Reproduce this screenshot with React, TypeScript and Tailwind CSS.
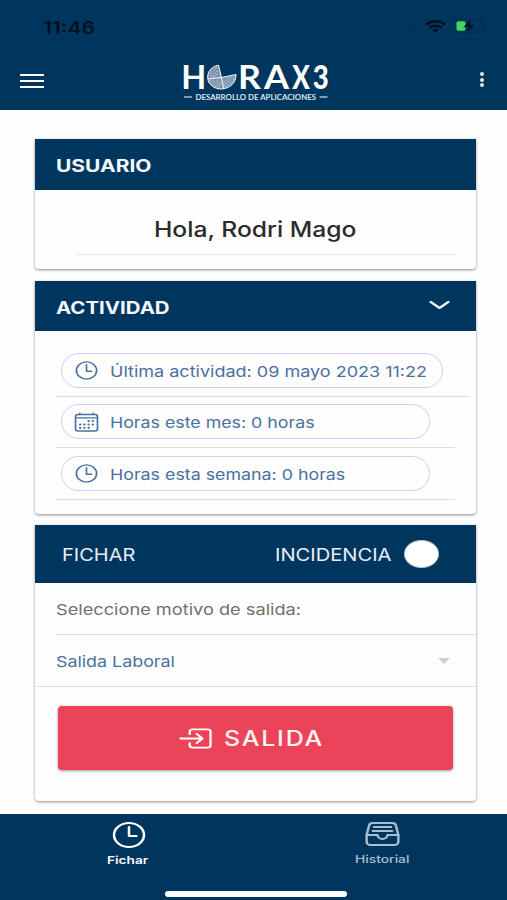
import React, { useLayoutEffect, useRef, useState } from 'react';
import {
  IoCalendarOutline,
  IoChevronDown,
  IoEnterOutline,
  IoFileTrayFullOutline,
  IoTimeOutline,
} from 'react-icons/io5';

// Text in the app's wide face: stretches its content to fill the given width
function Wide({ width, className = '', children }: { width: number; className?: string; children: React.ReactNode }) {
  const ref = useRef<HTMLSpanElement>(null);
  const [scale, setScale] = useState(1.2);

  useLayoutEffect(() => {
    if (ref.current) setScale(width / ref.current.offsetWidth);
  }, [width]);

  return (
    <span className={`block shrink-0 ${className}`} style={{ width }}>
      <span ref={ref} className="inline-block origin-left whitespace-nowrap" style={{ transform: `scaleX(${scale})` }}>
        {children}
      </span>
    </span>
  );
}

function StatusBar() {
  return (
    <div className="flex h-[54px] items-center justify-between pl-[43px] pr-5">
      <Wide width={52} className="pt-[2px] text-[17px] font-semibold leading-5 text-[#04101d]">11:46</Wide>
      <div className="flex items-center">
        <div className="mr-[8px] mt-[6px] flex gap-[4px]">
          <i className="h-[2px] w-[2px] rounded-full bg-[#032b4f]" />
          <i className="h-[2px] w-[2px] rounded-full bg-[#032b4f]" />
          <i className="h-[2px] w-[2px] rounded-full bg-[#032b4f]" />
          <i className="h-[2px] w-[2px] rounded-full bg-[#032b4f]" />
        </div>
        <svg className="mb-[2px] mr-[8px] h-[13px] w-[21px]" viewBox="0 0 21 13" fill="none" stroke="#04101d" strokeWidth="2.4">
          <path d="M1 4.6C6.2.2 14.8.2 20 4.6" />
          <path d="M4.4 7.9c3.4-2.9 8.8-2.9 12.2 0" />
          <path d="M7.3 10.1a5 5 0 0 1 6.4 0L10.5 13z" fill="#04101d" stroke="none" />
        </svg>
        <svg className="mb-[2px] h-[14px] w-[33px]" viewBox="0 0 33 14">
          <rect x=".6" y=".6" width="28.5" height="12.8" rx="3.5" fill="none" stroke="#032d52" strokeWidth="1.2" />
          <path d="M30.5 4.5q2 2.5 0 5z" fill="#032d52" />
          <rect x="2.5" y="2.3" width="9" height="9.4" rx="2" fill="#43d663" />
          <path d="M16.5 0 9.8 8h4.7l-1.8 6L20.4 5.8h-4.9z" fill="#04101d" stroke="#00365e" strokeWidth=".4" />
        </svg>
      </div>
    </div>
  );
}

function Logo() {
  return (
    <svg className="h-[54px] w-[150px]" viewBox="181 54 150 54" fill="#fff" fontFamily="Lato, sans-serif">
      <text x="181.3" y="89" fontSize="33" fontWeight="700" textLength="25" lengthAdjust="spacingAndGlyphs">H</text>
      <text x="238" y="89" fontSize="33" fontWeight="700" textLength="23" lengthAdjust="spacingAndGlyphs">R</text>
      <text x="264" y="89" fontSize="33" fontWeight="700" textLength="25" lengthAdjust="spacingAndGlyphs">A</text>
      <text x="292.3" y="89" fontSize="33" fontWeight="900" textLength="17.5" lengthAdjust="spacingAndGlyphs">X</text>
      <text x="312.8" y="89" fontSize="33" fontWeight="900" textLength="16" lengthAdjust="spacingAndGlyphs">3</text>

      {/* citrus slice standing in for the O */}
      <path d="M221.5 77.5 218.5 65.3C211 66.5 207.3 72 207.7 78.5 208.5 85 214.5 89 221.5 89 230 88.5 236 83 236 74.5z" fill="#7892ab" stroke="#fff" strokeWidth="1" />
      <g fill="none" stroke="#d9e5ee" strokeWidth=".5">
        <path d="M217 68c-4 1.5-6.5 5-6.5 9.5M218 71c-3 1-5 3-5 6.5M218 74c-2 .5-3 1.5-3 3.5M210 80c1.5 4 5 6.5 10 7M213 80c1 2.5 4 4.5 8 5M216 80c1 1.5 3 2.5 5 3M234 77c-1 5-5 9.5-11 10M231 77c-1 4-3.5 7-8 8M228 77.5c-1 3-2.5 4.5-5 5.5" />
      </g>
      <path d="M221.5 77.5 208 79M221.5 77.5l2 11.5" stroke="#fff" strokeWidth="1" />

      <path d="M184 97h8M319.5 97h8" stroke="#fff" strokeWidth="1" />
      <text x="195.5" y="99.7" fontSize="7.5" fontWeight="700" fill="#dbe6ef" textLength="120.5" lengthAdjust="spacingAndGlyphs">DESARROLLO DE APLICACIONES</text>
    </svg>
  );
}

function Header() {
  return (
    <header className="h-[110px] bg-[#00365e] text-white">
      <StatusBar />
      <div className="flex h-[54px] items-start pl-5">
        <div className="mt-[20px] flex w-6 flex-col gap-[4px]">
          <i className="h-[2px] bg-white" />
          <i className="h-[2px] bg-white" />
          <i className="h-[2px] bg-white" />
        </div>
        <div className="ml-[137px]"><Logo /></div>
        <div className="ml-[149px] mt-[18px] flex flex-col gap-[1.5px]">
          <i className="h-[4px] w-[4px] rounded-full bg-[#dbe7f2]" />
          <i className="h-[4px] w-[4px] rounded-full bg-[#dbe7f2]" />
          <i className="h-[4px] w-[4px] rounded-full bg-[#dbe7f2]" />
        </div>
      </div>
    </header>
  );
}

function Card({ className, children }: { className: string; children: React.ReactNode }) {
  return (
    <section className={`w-[441px] overflow-hidden rounded-b-[4px] bg-[#fefefe] shadow-[0_1px_3px_rgba(0,0,0,0.45)] ${className}`}>
      {children}
    </section>
  );
}

type ActivityRowProps = {
  icon: React.ReactNode;
  text: string;
  textWidth: number;
  pill: string;
  line: string;
};

function ActivityRow({ icon, text, textWidth, pill, line }: ActivityRowProps) {
  return (
    <div className={`flex h-[51.5px] items-center border-b border-[#dedede] pl-[5px] ${line}`}>
      <div className={`flex h-[35px] items-center rounded-full border border-[#cfccf8] pl-[11px] text-[#49719f] ${pill}`}>
        <div className="mr-[10px] flex w-[27px] justify-center pt-[1px]">{icon}</div>
        <Wide width={textWidth} className="pt-[3px] text-[15px] leading-5">{text}</Wide>
      </div>
    </div>
  );
}

export default function App() {
  return (
    <div className="flex h-[900px] w-[507px] flex-col overflow-hidden bg-[#fefefe] font-[Inter,sans-serif]">
      <Header />

      <main className="flex h-[704px] flex-col pl-[35px] pt-[29px]">
        <Card className="h-[130px]">
          <div className="flex h-[51px] items-center bg-[#00365e] pl-[21px] pt-[3px] text-[#f3f8fc]">
            <Wide width={95} className="text-[17px] font-bold leading-5">USUARIO</Wide>
          </div>
          <div className="ml-[42px] flex h-[65px] w-[379px] items-center border-b border-[#e2e2e2] pl-[77px] pt-4">
            <Wide width={202} className="text-[21px] font-medium leading-6 text-[#2b2b2b]">Hola, Rodri Mago</Wide>
          </div>
        </Card>

        <Card className="mt-[12px] h-[233px]">
          <div className="flex h-[50px] items-center justify-between bg-[#00365e] pl-[21px] pr-[21px] pt-[2px] text-[#f3f8fc]">
            <Wide width={114} className="pt-[1px] text-[17px] font-bold leading-5">ACTIVIDAD</Wide>
            <IoChevronDown preserveAspectRatio="none" className="mb-[4px] h-[22px] w-[31px]" />
          </div>
          <div className="pl-[21px] pt-[14px]">
            <ActivityRow
              icon={<IoTimeOutline preserveAspectRatio="none" className="h-[23px] w-[27px]" />}
              text="Última actividad: 09 mayo 2023 11:22"
              textWidth={317}
              pill="w-[382px]"
              line="w-[413px]"
            />
            <ActivityRow
              icon={<IoCalendarOutline preserveAspectRatio="none" className="h-[22px] w-[27px]" />}
              text="Horas este mes: 0 horas"
              textWidth={205}
              pill="w-[369px]"
              line="w-[399px]"
            />
            <ActivityRow
              icon={<IoTimeOutline preserveAspectRatio="none" className="h-[23px] w-[27px]" />}
              text="Horas esta semana: 0 horas"
              textWidth={235}
              pill="w-[369px]"
              line="w-[399px]"
            />
          </div>
        </Card>

        <Card className="mt-[11px] h-[276px]">
          <div className="flex h-[58px] items-center bg-[#00365e] pl-[27px] text-[#e6eff7]">
            <Wide width={73} className="pt-[2px] text-[17px] leading-5">FICHAR</Wide>
            <Wide width={116} className="ml-[140px] pt-[2px] text-[17px] leading-5">INCIDENCIA</Wide>
            <div className="ml-[13px] h-[28px] w-[35px] rounded-[50%] border border-[#b9c5d0] bg-white" />
          </div>
          <div className="ml-[21px] flex h-[52px] items-center border-b border-[#e0e0e0]">
            <Wide width={245} className="pt-[2px] text-[15px] leading-5 text-[#707070]">Seleccione motivo de salida:</Wide>
          </div>
          <div className="flex h-[52px] items-center justify-between border-b border-[#e0e0e0] pl-[21px] pr-[26px]">
            <Wide width={119} className="pt-[2px] text-[15px] leading-5 text-[#49719f]">Salida Laboral</Wide>
            <div className="border-x-[6.5px] border-t-[6px] border-x-transparent border-t-[#c5cfdd]" />
          </div>
          <button className="ml-[23px] mt-[19px] flex h-[64px] w-[395px] items-center rounded-[4px] bg-[#eb445a] pl-[119px] text-white shadow-[0_1px_3px_rgba(0,0,0,0.4)]">
            <IoEnterOutline preserveAspectRatio="none" className="mr-[10px] h-[29px] w-[37px]" />
            <Wide width={100} className="text-left text-[21.5px] font-medium leading-6 tracking-[1.5px] text-[#fff3f4]">SALIDA</Wide>
          </button>
        </Card>
      </main>

      <footer className="flex h-[86px] flex-col items-center bg-[#00365e]">
        <nav className="flex h-[77px] w-full">
          <div className="flex w-[257px] flex-col items-center pt-[5px] text-white">
            <IoTimeOutline preserveAspectRatio="none" className="ml-[2px] h-[32px] w-[40px]" />
            <Wide width={41} className="mt-[1px] text-[11px] font-semibold leading-4">Fichar</Wide>
          </div>
          <div className="flex w-[252px] flex-col items-center pt-[4px] text-[#aabdd0]">
            <IoFileTrayFullOutline preserveAspectRatio="none" className="ml-[3px] h-[32px] w-[39px]" />
            <Wide width={54} className="ml-[2px] mt-[1px] text-[11px] font-medium leading-4">Historial</Wide>
          </div>
        </nav>
        <div className="ml-[5px] h-[6px] w-[182px] rounded-full bg-white" />
      </footer>
    </div>
  );
}
